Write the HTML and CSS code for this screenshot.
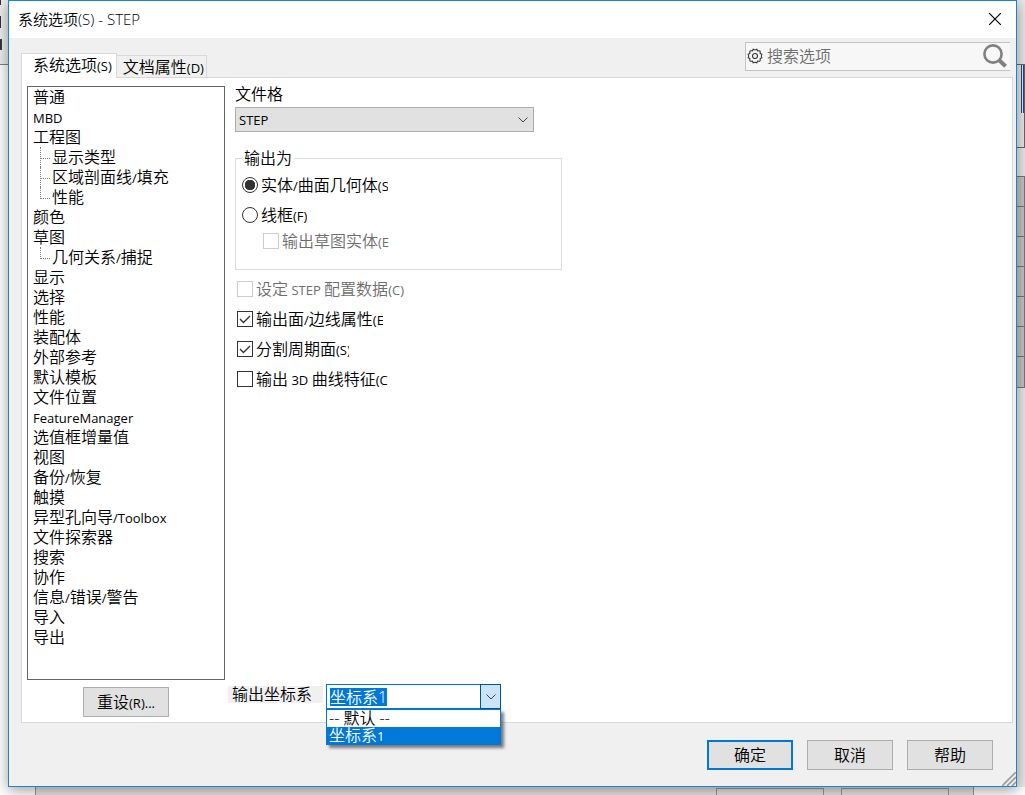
FILE: index.html
```
<!DOCTYPE html>
<html lang="zh-CN">
<head>
    <meta charset="UTF-8">
    <meta name="viewport" content="width=device-width, initial-scale=1.0">
    <title>系统选项(S) - STEP</title>
    <link rel="stylesheet" href="styles.css">
</head>
<body>
    <div class="app-left">
        <span class="mark"></span>
        <span class="mark tall"></span>
        <span class="mark box"></span>
        <span class="rule"></span>
    </div>

    <main class="dialog" role="dialog" aria-labelledby="dialogTitle">
        <header class="titlebar">
            <h1 id="dialogTitle">系统选项(S) - STEP</h1>
            <button class="close" aria-label="关闭">
                <svg width="12" height="12" viewBox="0 0 12 12"><path d="M0 0L12 12M12 0L0 12" stroke="#000" stroke-width="1.2"/></svg>
            </button>
        </header>

        <div class="toolbar">
            <div class="tabs" role="tablist">
                <button class="tab active" role="tab" aria-selected="true">系统选项<span class="en">(S)</span></button>
                <button class="tab" role="tab" aria-selected="false">文档属性<span class="en">(D)</span></button>
            </div>
            <div class="search">
                <svg width="16" height="16" viewBox="0 0 18 18" fill="none" stroke="#333" stroke-width="1.2">
                    <path d="M7 1.2Q9 2.8 11 1.2L11.8 3.2Q14 3 14.6 3.4Q15 4 14.8 6.2L16.8 7Q15.2 9 16.8 11L14.8 11.8Q15 14 14.6 14.6Q14 15 11.8 14.8L11 16.8Q9 15.2 7 16.8L6.2 14.8Q4 15 3.4 14.6Q3 14 3.2 11.8L1.2 11Q2.8 9 1.2 7L3.2 6.2Q3 4 3.4 3.4Q4 3 6.2 3.2Z" stroke-linejoin="round"/>
                    <circle cx="9" cy="9" r="2.8"/>
                </svg>
                <input type="text" placeholder="搜索选项" aria-label="搜索选项">
                <button class="search-button" aria-label="搜索">
                    <svg width="24" height="24" viewBox="0 0 24 24" fill="none" stroke="#808080">
                        <circle cx="10" cy="10" r="8.6" stroke-width="2.6"/>
                        <path d="M16.2 16.2L22.6 22.2" stroke-width="4"/>
                    </svg>
                </button>
            </div>
        </div>

        <div class="panel">
            <div class="side">
                <ul class="tree">
                    <li>普通</li>
                    <li><span class="en">MBD</span></li>
                    <li>工程图
                        <ul>
                            <li>显示类型</li>
                            <li>区域剖面线<span class="en">/</span>填充</li>
                            <li>性能</li>
                        </ul>
                    </li>
                    <li>颜色</li>
                    <li>草图
                        <ul>
                            <li>几何关系<span class="en">/</span>捕捉</li>
                        </ul>
                    </li>
                    <li>显示</li>
                    <li>选择</li>
                    <li>性能</li>
                    <li>装配体</li>
                    <li>外部参考</li>
                    <li>默认模板</li>
                    <li>文件位置</li>
                    <li><span class="en">FeatureManager</span></li>
                    <li>选值框增量值</li>
                    <li>视图</li>
                    <li>备份<span class="en">/</span>恢复</li>
                    <li>触摸</li>
                    <li>异型孔向导<span class="en">/Toolbox</span></li>
                    <li>文件探索器</li>
                    <li>搜索</li>
                    <li>协作</li>
                    <li>信息<span class="en">/</span>错误<span class="en">/</span>警告</li>
                    <li>导入</li>
                    <li>导出</li>
                </ul>
                <button class="button reset">重设<span class="en">(R)...</span></button>
            </div>

            <div class="options">
                <label class="caption" for="format">文件格</label>
                <div class="select">
                    <select id="format">
                        <option>STEP</option>
                    </select>
                    <svg width="10" height="6" viewBox="0 0 10 6" fill="none" stroke="#444"><path d="M0.5 0.5L5 5L9.5 0.5"/></svg>
                </div>

                <fieldset>
                    <legend>输出为</legend>
                    <div class="option">
                        <input type="radio" name="output" id="solid" checked>
                        <label class="clip-long" for="solid">实体<span class="en">/</span>曲面几何体<span class="en">(S</span></label>
                    </div>
                    <div class="option">
                        <input type="radio" name="output" id="wire">
                        <label for="wire">线框<span class="en">(F)</span></label>
                    </div>
                    <div class="option nested">
                        <input type="checkbox" id="sketch" disabled>
                        <label for="sketch">输出草图实体<span class="en">(E</span></label>
                    </div>
                </fieldset>

                <div class="option">
                    <input type="checkbox" id="config" disabled>
                    <label for="config">设定<span class="en"> STEP </span>配置数据<span class="en">(C)</span></label>
                </div>
                <div class="option">
                    <input type="checkbox" id="faces" checked>
                    <label class="clip-long" for="faces">输出面<span class="en">/</span>边线属性<span class="en">(E</span></label>
                </div>
                <div class="option">
                    <input type="checkbox" id="split" checked>
                    <label class="clip-short" for="split">分割周期面<span class="en">(S)</span></label>
                </div>
                <div class="option">
                    <input type="checkbox" id="curves">
                    <label for="curves">输出<span class="en"> 3D </span>曲线特征<span class="en">(C</span></label>
                </div>

                <div class="coords">
                    <label for="coordinate">输出坐标系</label>
                    <div class="combo">
                        <input type="text" id="coordinate" value="坐标系1">
                        <button class="drop" aria-label="展开">
                            <svg width="10" height="6" viewBox="0 0 10 6" fill="none" stroke="#444"><path d="M0.5 0.5L5 5L9.5 0.5"/></svg>
                        </button>
                        <ul class="popup" role="listbox">
                            <li role="option">-- 默认 --</li>
                            <li role="option" class="selected" aria-selected="true">坐标系<span class="en">1</span></li>
                        </ul>
                    </div>
                </div>
            </div>
        </div>

        <footer class="actions">
            <button class="button primary">确定</button>
            <button class="button">取消</button>
            <button class="button">帮助</button>
        </footer>
        <svg class="grip" width="14" height="14" viewBox="0 0 14 14" stroke="#a0a0a0" stroke-width="1.8"><path d="M0 14L14 0M5 14L14 5M10 14L14 10"/></svg>
    </main>

    <div class="app-right">
        <div class="view"></div>
        <div class="cells">
            <span></span><span></span><span></span><span></span><span></span><span></span><span></span>
        </div>
    </div>
    <div class="app-bottom">
        <div class="strip"><span></span><span></span></div>
    </div>
</body>
</html>
```
FILE: styles.css
```
* {
    box-sizing: border-box;
}
body {
    margin: 0;
    height: 100vh;
    display: grid;
    grid-template-columns: 8px 1fr 8px;
    grid-template-rows: 1fr 8px;
    overflow: hidden;
    background-color: #fff;
    color: #000;
    font-family: "Open Sans", "Noto Sans CJK SC", sans-serif;
    font-size: 16px;
    font-weight: 350;
    line-height: 20px;
}
ul {
    list-style: none;
    margin: 0;
    padding: 0;
}
button, input, select {
    font: inherit;
    color: inherit;
    margin: 0;
    border-radius: 0;
}
button {
    padding: 0;
    white-space: nowrap;
}
.en {
    font-size: 13px;
    font-weight: 400;
    line-height: 1;
    white-space: pre;
}

/* application window behind the dialog */
.app-left {
    display: flex;
    flex-direction: column;
    height: 65px;
    gap: 11px;
    background-color: #eee;
    border-bottom: 1px solid #808080;
}
.mark {
    width: 1px;
    height: 5px;
    background-color: #333;
}
.mark.tall {
    height: 12px;
}
.mark.box {
    width: 2px;
    height: 11px;
    border: 1px solid #345;
    border-left: none;
}
.app-right {
    background-color: #e9e9e9;
}
.view {
    height: 84px;
    margin-top: 64px;
    border: 1px solid #666;
    border-left: none;
    background: linear-gradient(90deg, #1f4b91 1px, #e9e9e9 1px, #e9e9e9 2px, #1f4b91 2px) 4px 0 / 3px 48px no-repeat;
}
.cells {
    margin-top: 28px;
    border: 1px solid #777;
    border-left: none;
    background-color: #c4c4c4;
}
.cells span {
    display: block;
    height: 30px;
    border-bottom: 1px solid #777;
}
.cells span:last-child {
    border-bottom: none;
}
.app-bottom {
    grid-column: 1 / -1;
    padding: 0 51px 0 35px;
}
.strip {
    height: 8px;
    display: flex;
    justify-content: flex-end;
    gap: 17px;
    padding: 1px 24px 0 0;
    background-color: #e4e4e4;
    border: 1px solid #999;
    border-width: 0 1px;
}
.strip span {
    width: 108px;
    border: 1px solid #999;
    border-bottom: none;
}

.dialog {
    position: relative;
    z-index: 1;
    display: flex;
    flex-direction: column;
    min-width: 0;
    background-color: #f0f0f0;
    border: 1px solid #1883d7;
    box-shadow: 0 3px 14px rgba(0, 0, 0, 0.4);
}
.titlebar {
    display: flex;
    justify-content: space-between;
    align-items: center;
    height: 37px;
    padding: 0 15px 2px 9px;
    background-color: #fff;
}
.titlebar h1 {
    margin: 0;
    font-size: 15px;
    font-weight: inherit;
}
.close {
    display: flex;
    border: none;
    background: none;
}

.toolbar {
    display: flex;
    justify-content: space-between;
    height: 39px;
    padding: 0 6px 0 12px;
}
.tabs {
    position: relative;
    z-index: 1;
    display: flex;
    align-items: flex-end;
}
.tab {
    height: 22px;
    padding: 0 2px 0 6px;
    border: 1px solid #d9d9d9;
    border-left: none;
    border-bottom: none;
    background-color: #f0f0f0;
}
.tab.active {
    height: 25px;
    padding: 0 4px 3px 11px;
    margin-bottom: -1px;
    border-left: 1px solid #d9d9d9;
    background-color: #fff;
}
.search {
    display: flex;
    align-items: center;
    width: 265px;
    height: 29px;
    margin-top: 4px;
    padding: 0 3px 2px 1px;
    gap: 4px;
    background-color: #f7f7f7;
    border: 1px solid #c3c3c3;
    border-right: none;
}
.search svg {
    flex: none;
}
.search input {
    flex: 1;
    min-width: 0;
    padding: 0;
    border: none;
    background: none;
}
.search input::placeholder {
    color: #6d6d6d;
}
.search-button {
    display: flex;
    border: none;
    background: none;
}

.panel {
    flex: 1;
    display: grid;
    grid-template-columns: 198px 1fr;
    gap: 3px;
    margin: 0 3px 0 12px;
    padding: 8px 5px 5px;
    background-color: #fff;
    border: 1px solid #d9d9d9;
}
.side {
    display: flex;
    flex-direction: column;
    gap: 7px;
}
.tree {
    flex: 1;
    padding-left: 5px;
    border: 1px solid #646464;
}
.tree li {
    min-height: 20px;
}
.tree ul {
    padding-left: 7px;
}
.tree ul li {
    position: relative;
    padding-left: 12px;
}
/* dotted branch lines */
.tree ul li::before {
    content: "";
    position: absolute;
    left: 0;
    top: 0;
    width: 9px;
    height: 11px;
    border-left: 1px dotted #808080;
    border-bottom: 1px dotted #808080;
}
.tree ul li:not(:last-child)::after {
    content: "";
    position: absolute;
    left: 0;
    top: 11px;
    height: 9px;
    border-left: 1px dotted #808080;
}
.button {
    width: 86px;
    height: 30px;
    background-color: #e1e1e1;
    border: 1px solid #adadad;
}
.button:hover {
    background-color: #e5f1fb;
}
.button.primary {
    border: 2px solid #0078d7;
}
.reset {
    align-self: center;
}

.options {
    display: flex;
    flex-direction: column;
    align-items: flex-start;
    padding-left: 7px;
}
.caption {
    line-height: 16px;
    margin-bottom: 5px;
}
.select {
    display: grid;
    align-items: center;
    width: 299px;
}
.select select, .select svg {
    grid-area: 1 / 1;
}
.select select {
    appearance: none;
    height: 25px;
    padding: 0 3px;
    font-size: 13px;
    font-weight: 400;
    background-color: #e1e1e1;
    border: 1px solid #adadad;
}
.select svg {
    justify-self: end;
    margin-right: 6px;
    pointer-events: none;
}
fieldset {
    width: 327px;
    margin: 18px 0 9px;
    padding: 9px 5px 18px;
    border: 1px solid #dcdcdc;
}
legend {
    padding: 0 2px;
    margin-left: 1px;
    line-height: 16px;
}
.option {
    display: flex;
    align-items: center;
    gap: 3px;
    height: 20px;
    margin-bottom: 10px;
}
.options > .option {
    padding-left: 2px;
}
fieldset .option {
    padding-left: 1px;
}
fieldset .option.nested {
    margin: -4px 0 0 21px;
}
.option label {
    overflow: hidden;
    white-space: nowrap;
}
.option input {
    appearance: none;
    flex: none;
    width: 16px;
    height: 16px;
    background: #fff center no-repeat;
    border: 1px solid #333;
}
.option input[type="radio"] {
    border-radius: 50%;
}
.option input[type="radio"]:checked {
    background-image: radial-gradient(circle, #333 5px, transparent 5.5px);
}
.option input[type="checkbox"]:checked {
    background-image: url("data:image/svg+xml,%3Csvg xmlns='http://www.w3.org/2000/svg' width='14' height='14'%3E%3Cpath d='M2 7L5.5 10.5L12 4' fill='none' stroke='%23333' stroke-width='1.4'/%3E%3C/svg%3E");
}
.option input:disabled {
    border-color: #ccc;
}
.option input:disabled + label {
    color: #6d6d6d;
}
.clip-long {
    max-width: 127px;
}
.clip-short {
    max-width: 93px;
}

.coords {
    display: flex;
    gap: 3px;
    margin: auto 0 8px -7px;
}
.coords label {
    align-self: flex-start;
    width: 95px;
    margin-top: 2px;
    padding-left: 4px;
    line-height: 17px;
    background-color: #f0f0f0;
}
.combo {
    position: relative;
    display: flex;
    align-items: center;
    justify-content: space-between;
    width: 175px;
    height: 25px;
    padding-left: 3px;
    border: 1px solid #0078d7;
}
.combo input {
    width: 57px;
    height: 18px;
    padding: 0;
    border: none;
    outline: none;
    color: #fff;
    background-color: #0078d7;
}
.drop {
    display: flex;
    align-items: center;
    justify-content: center;
    width: 21px;
    height: 25px;
    margin-right: -1px;
    background-color: #cce4f7;
    border: 1px solid #005499;
}
.popup {
    position: absolute;
    z-index: 2;
    top: calc(100% + 1px);
    left: -1px;
    right: -1px;
    background-color: #fff;
    border: 1px solid #0078d7;
    box-shadow: 3px 3px 3px rgba(0, 0, 0, 0.5);
}
.popup li {
    height: 17px;
    padding-left: 2px;
    line-height: 17px;
}
.popup .selected {
    color: #fff;
    background-color: #0078d7;
}

.actions {
    display: flex;
    justify-content: flex-end;
    gap: 14px;
    padding: 17px 23px 16px;
}
.grip {
    position: absolute;
    right: 0;
    bottom: 0;
}
```
